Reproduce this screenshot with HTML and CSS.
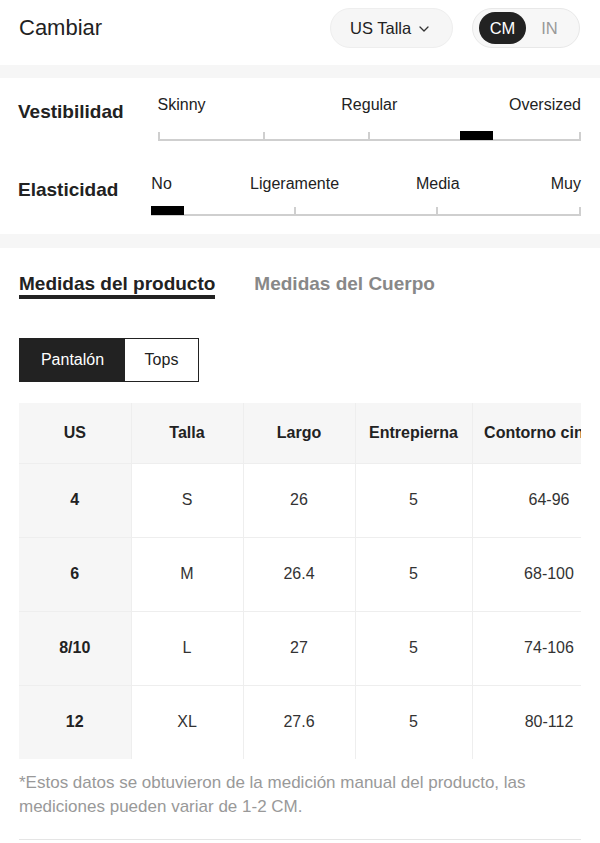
FILE: index.html
```html
<!DOCTYPE html>
<html lang="es">
<head>
<meta charset="utf-8">
<title>Guía de tallas</title>
<link rel="stylesheet" href="styles.css">
</head>
<body>
<header class="header">
  <div class="title">Cambiar</div>
  <div class="header-actions">
    <button class="size-pill">US Talla
      <svg class="chev" width="10" height="6" viewBox="0 0 10 6"><path d="M1 1l4 4 4-4" fill="none" stroke="#333" stroke-width="1.3" stroke-linecap="round" stroke-linejoin="round"/></svg>
    </button>
    <div class="unit-toggle">
      <span class="unit active">CM</span>
      <span class="unit">IN</span>
    </div>
  </div>
</header>
<div class="band"></div>

<section class="fit">
  <div class="fit-row">
    <div class="fit-label">Vestibilidad</div>
    <div class="scale">
      <div class="scale-labels">
        <span class="lab lab-start">Skinny</span>
        <span class="lab">Regular</span>
        <span class="lab lab-end">Oversized</span>
      </div>
      <div class="track">
        <span class="seg"></span><span class="seg"></span><span class="seg"></span><span class="seg seg-last"></span>
        <span class="marker marker-vest"></span>
      </div>
    </div>
  </div>
  <div class="fit-row fit-row-2">
    <div class="fit-label fit-label-2">Elasticidad</div>
    <div class="scale">
      <div class="scale-labels">
        <span class="lab lab-start">No</span>
        <span class="lab">Ligeramente</span>
        <span class="lab">Media</span>
        <span class="lab lab-end">Muy</span>
      </div>
      <div class="track track-2">
        <span class="seg"></span><span class="seg"></span><span class="seg seg-last"></span>
        <span class="marker marker-elas"></span>
      </div>
    </div>
  </div>
</section>
<div class="band band-2"></div>

<section class="measures">
  <nav class="tabs">
    <span class="tab active">Medidas del producto</span>
    <span class="tab">Medidas del Cuerpo</span>
  </nav>
  <div class="segment">
    <span class="seg-btn active">Pantalón</span>
    <span class="seg-btn">Tops</span>
  </div>
  <div class="table-wrap">
    <table class="size-table">
      <colgroup>
        <col class="c1"><col class="c2"><col class="c3"><col class="c4"><col class="c5">
      </colgroup>
      <thead>
        <tr><th>US</th><th>Talla</th><th>Largo</th><th>Entrepierna</th><th>Contorno cintura</th></tr>
      </thead>
      <tbody>
        <tr><td>4</td><td>S</td><td>26</td><td>5</td><td>64-96</td></tr>
        <tr><td>6</td><td>M</td><td>26.4</td><td>5</td><td>68-100</td></tr>
        <tr><td>8/10</td><td>L</td><td>27</td><td>5</td><td>74-106</td></tr>
        <tr><td>12</td><td>XL</td><td>27.6</td><td>5</td><td>80-112</td></tr>
      </tbody>
    </table>
  </div>
  <p class="note">*Estos datos se obtuvieron de la medición manual del producto, las mediciones pueden variar de 1-2 CM.</p>
  <div class="divider"></div>
</section>
</body>
</html>
```
FILE: styles.css
```css
* { box-sizing: border-box; }
html, body { margin: 0; padding: 0; background: #fff; }
body {
  width: 600px;
  font-family: "Liberation Sans", Arial, sans-serif;
  color: #222;
  overflow: hidden;
}

.header {
  height: 65px;
  padding: 8px 20px 0 19px;
  display: flex;
  justify-content: space-between;
  align-items: flex-start;
}
.title {
  font-size: 22px;
  line-height: 40px;
  color: #222;
}
.header-actions {
  display: flex;
  gap: 19px;
}
.size-pill {
  height: 40px;
  width: 123px;
  padding: 0 0 0 19px;
  border: 1px solid #eeeeee;
  background: #f6f6f6;
  border-radius: 20px;
  font-family: inherit;
  font-size: 16.5px;
  color: #222;
  display: flex;
  align-items: center;
  gap: 8px;
}
.chev { margin-top: 1px; }
.unit-toggle {
  height: 40px;
  width: 108px;
  border: 1px solid #e8e8e8;
  background: #f7f7f7;
  border-radius: 20px;
  padding: 3px 6px;
  display: flex;
}
.unit {
  width: 47px;
  height: 32px;
  border-radius: 16px;
  display: flex;
  align-items: center;
  justify-content: center;
  font-size: 16.5px;
  color: #999;
}
.unit.active {
  background: #222;
  color: #fff;
}

.band {
  height: 13px;
  background: #f6f6f6;
}
.band-2 { height: 14px; }

.fit {
  padding: 18px 19px 18px 18px;
}
.fit-row {
  display: flex;
  align-items: flex-start;
  gap: 34px;
}
.fit-row-2 {
  margin-top: 34px;
  gap: 33px;
}
.fit-label {
  font-size: 19px;
  font-weight: bold;
  line-height: 22px;
  margin-top: 5px;
  color: #222;
}
.fit-label-2 { margin-top: 4px; }
.scale { flex: 1; }
.scale-labels {
  display: flex;
  justify-content: space-between;
  font-size: 16px;
  line-height: 18px;
  height: 18px;
  color: #222;
}
.lab {
  width: 0;
  display: flex;
  justify-content: center;
  white-space: nowrap;
}
.lab-start { justify-content: flex-start; }
.lab-end { justify-content: flex-end; }

.track {
  position: relative;
  margin-top: 17px;
  height: 10px;
  display: flex;
  align-items: flex-end;
}
.track-2 { margin-top: 13px; }
.seg {
  flex: 1;
  height: 9px;
  border-left: 2px solid #cfcfcf;
  border-bottom: 2px solid #cfcfcf;
}
.seg-last { border-right: 2px solid #cfcfcf; }
.marker {
  position: absolute;
  bottom: 1px;
  height: 9px;
  width: 33px;
  background: #000;
}
.marker-vest { left: 302px; }
.marker-elas { left: 0; }

.measures {
  padding: 25px 19px 0 19px;
}
.tabs {
  display: flex;
  gap: 39px;
}
.tab {
  font-size: 19px;
  font-weight: bold;
  line-height: 22px;
  color: #888;
  border-bottom: 4px solid transparent;
}
.tab.active {
  color: #222;
  border-bottom-color: #222;
}

.segment {
  margin-top: 39px;
  display: inline-flex;
  height: 44px;
  border: 1px solid #222;
}
.seg-btn {
  display: flex;
  align-items: center;
  justify-content: center;
  font-size: 16px;
  color: #222;
  width: 73px;
}
.seg-btn.active {
  width: 105px;
  background: #222;
  color: #fff;
}

.table-wrap {
  margin-top: 21px;
  width: 562px;
  overflow: hidden;
}
.size-table {
  border-collapse: collapse;
  table-layout: fixed;
  width: 607px;
}
.c1, .c2, .c3 { width: 112px; }
.c4 { width: 117px; }
.c5 { width: 154px; }
.size-table th,
.size-table td {
  border: 1px solid #eeeeee;
  text-align: center;
  padding: 0;
  white-space: nowrap;
  overflow: hidden;
}
.size-table tr > :first-child { border-left: none; }
.size-table thead tr th { border-top: none; }
.size-table th {
  height: 60px;
  background: #f6f6f6;
  font-size: 16px;
  font-weight: bold;
  color: #222;
}
.size-table td {
  height: 74px;
  font-size: 16px;
  color: #333;
}
.size-table td:first-child {
  background: #f6f6f6;
  font-weight: bold;
  color: #222;
}
.size-table tbody tr:last-child td { border-bottom: none; }

.note {
  margin: 12px 0 0 0;
  max-width: 540px;
  font-size: 17px;
  line-height: 24px;
  color: #999;
}
.divider {
  margin-top: 20px;
  border-top: 1px solid #e5e5e5;
}
```
